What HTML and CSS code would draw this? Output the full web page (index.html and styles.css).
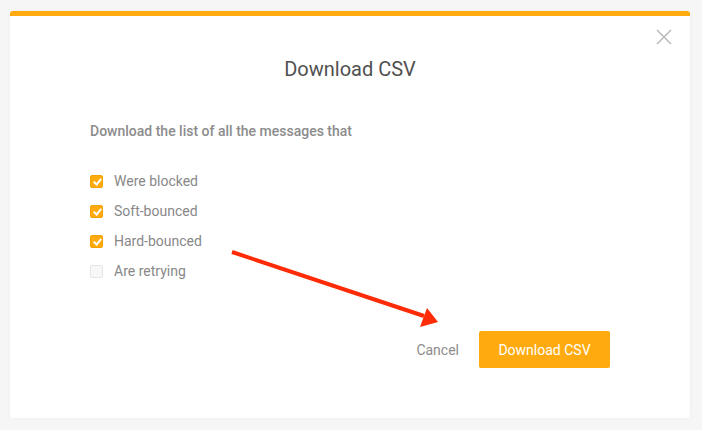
FILE: index.html
```html
<!DOCTYPE html>
<html>
    <head>
        <meta charset="UTF-8">
        <title>Download CSV</title>
        <link rel="stylesheet" href="styles.css">
    </head>
    <body>
        <div class="modal">
            <button class="close" aria-label="Close">
                <svg width="16" height="16" viewBox="0 0 16 16">
                    <path d="M1 1 L15 15 M15 1 L1 15" stroke="#bdbdbd" stroke-width="1.6" fill="none"/>
                </svg>
            </button>

            <h2 class="title">Download CSV</h2>

            <div class="content">
                <p class="lead">Download the list of all the messages that</p>

                <ul class="options">
                    <li><span class="check on"></span>Were blocked</li>
                    <li><span class="check on"></span>Soft-bounced</li>
                    <li><span class="check on"></span>Hard-bounced</li>
                    <li><span class="check"></span>Are retrying</li>
                </ul>
            </div>

            <div class="actions">
                <a class="cancel" href="#">Cancel</a>
                <button class="primary">Download CSV</button>
            </div>
        </div>

        <!-- annotation arrow -->
        <svg class="arrow" width="702" height="430" viewBox="0 0 702 430">
            <line x1="232" y1="252" x2="424" y2="316" stroke="#ff2b06" stroke-width="4"/>
            <polygon points="438,322 420,327 427,308" fill="#ff2b06"/>
        </svg>
    </body>
</html>
```

FILE: styles.css
```css
* {
    box-sizing: border-box;
    font-family: Roboto, "Liberation Sans", Arial, sans-serif;
}

html, body {
    margin: 0;
    height: 100%;
}

body {
    background: #f6f6f6;
    padding: 11px 12px 12px 10px;
    position: relative;
}

.modal {
    position: relative;
    height: 407px;
    background: #fff;
    border-top: 5px solid #ffab0f;
    border-radius: 3px;
    box-shadow: 0 0 4px rgba(0, 0, 0, 0.04);
    display: flex;
    flex-direction: column;
}

.close {
    position: absolute;
    top: 13px;
    right: 18px;
    width: 16px;
    height: 16px;
    padding: 0;
    border: 0;
    background: none;
    cursor: pointer;
}

.title {
    margin: 41px 0 0;
    text-align: center;
    font-size: 20px;
    font-weight: 400;
    line-height: 24px;
    color: #505050;
}

.content {
    padding: 0 80px;
}

.lead {
    margin: 42px 0 0;
    font-size: 14px;
    font-weight: 500;
    line-height: 16px;
    color: #8c8c8c;
}

.options {
    list-style: none;
    margin: 27px 0 0;
    padding: 0;
}

.options li {
    display: flex;
    align-items: center;
    height: 30px;
    font-size: 14px;
    color: #888;
}

.check {
    width: 13px;
    height: 13px;
    margin-right: 11px;
    border-radius: 2px;
    border: 1px solid #e6e6e6;
    background: #f7f7f7;
    position: relative;
}

.check.on {
    border-color: #f5a200;
    background: #ffab0f;
}

.check.on::after {
    content: "";
    position: absolute;
    left: 3.5px;
    top: 1px;
    width: 3px;
    height: 6px;
    border: solid #fff;
    border-width: 0 2px 2px 0;
    transform: rotate(40deg);
}

.actions {
    display: flex;
    justify-content: flex-end;
    align-items: center;
    gap: 20px;
    margin-top: auto;
    padding: 0 80px 50px 0;
}

.cancel {
    font-size: 14px;
    color: #8c8c8c;
    text-decoration: none;
}

.primary {
    width: 131px;
    height: 37px;
    border: 0;
    border-radius: 2px;
    background: #ffab0f;
    color: #fff;
    font-size: 14px;
    cursor: pointer;
}

.arrow {
    position: absolute;
    left: 0;
    top: 0;
    pointer-events: none;
}
```
